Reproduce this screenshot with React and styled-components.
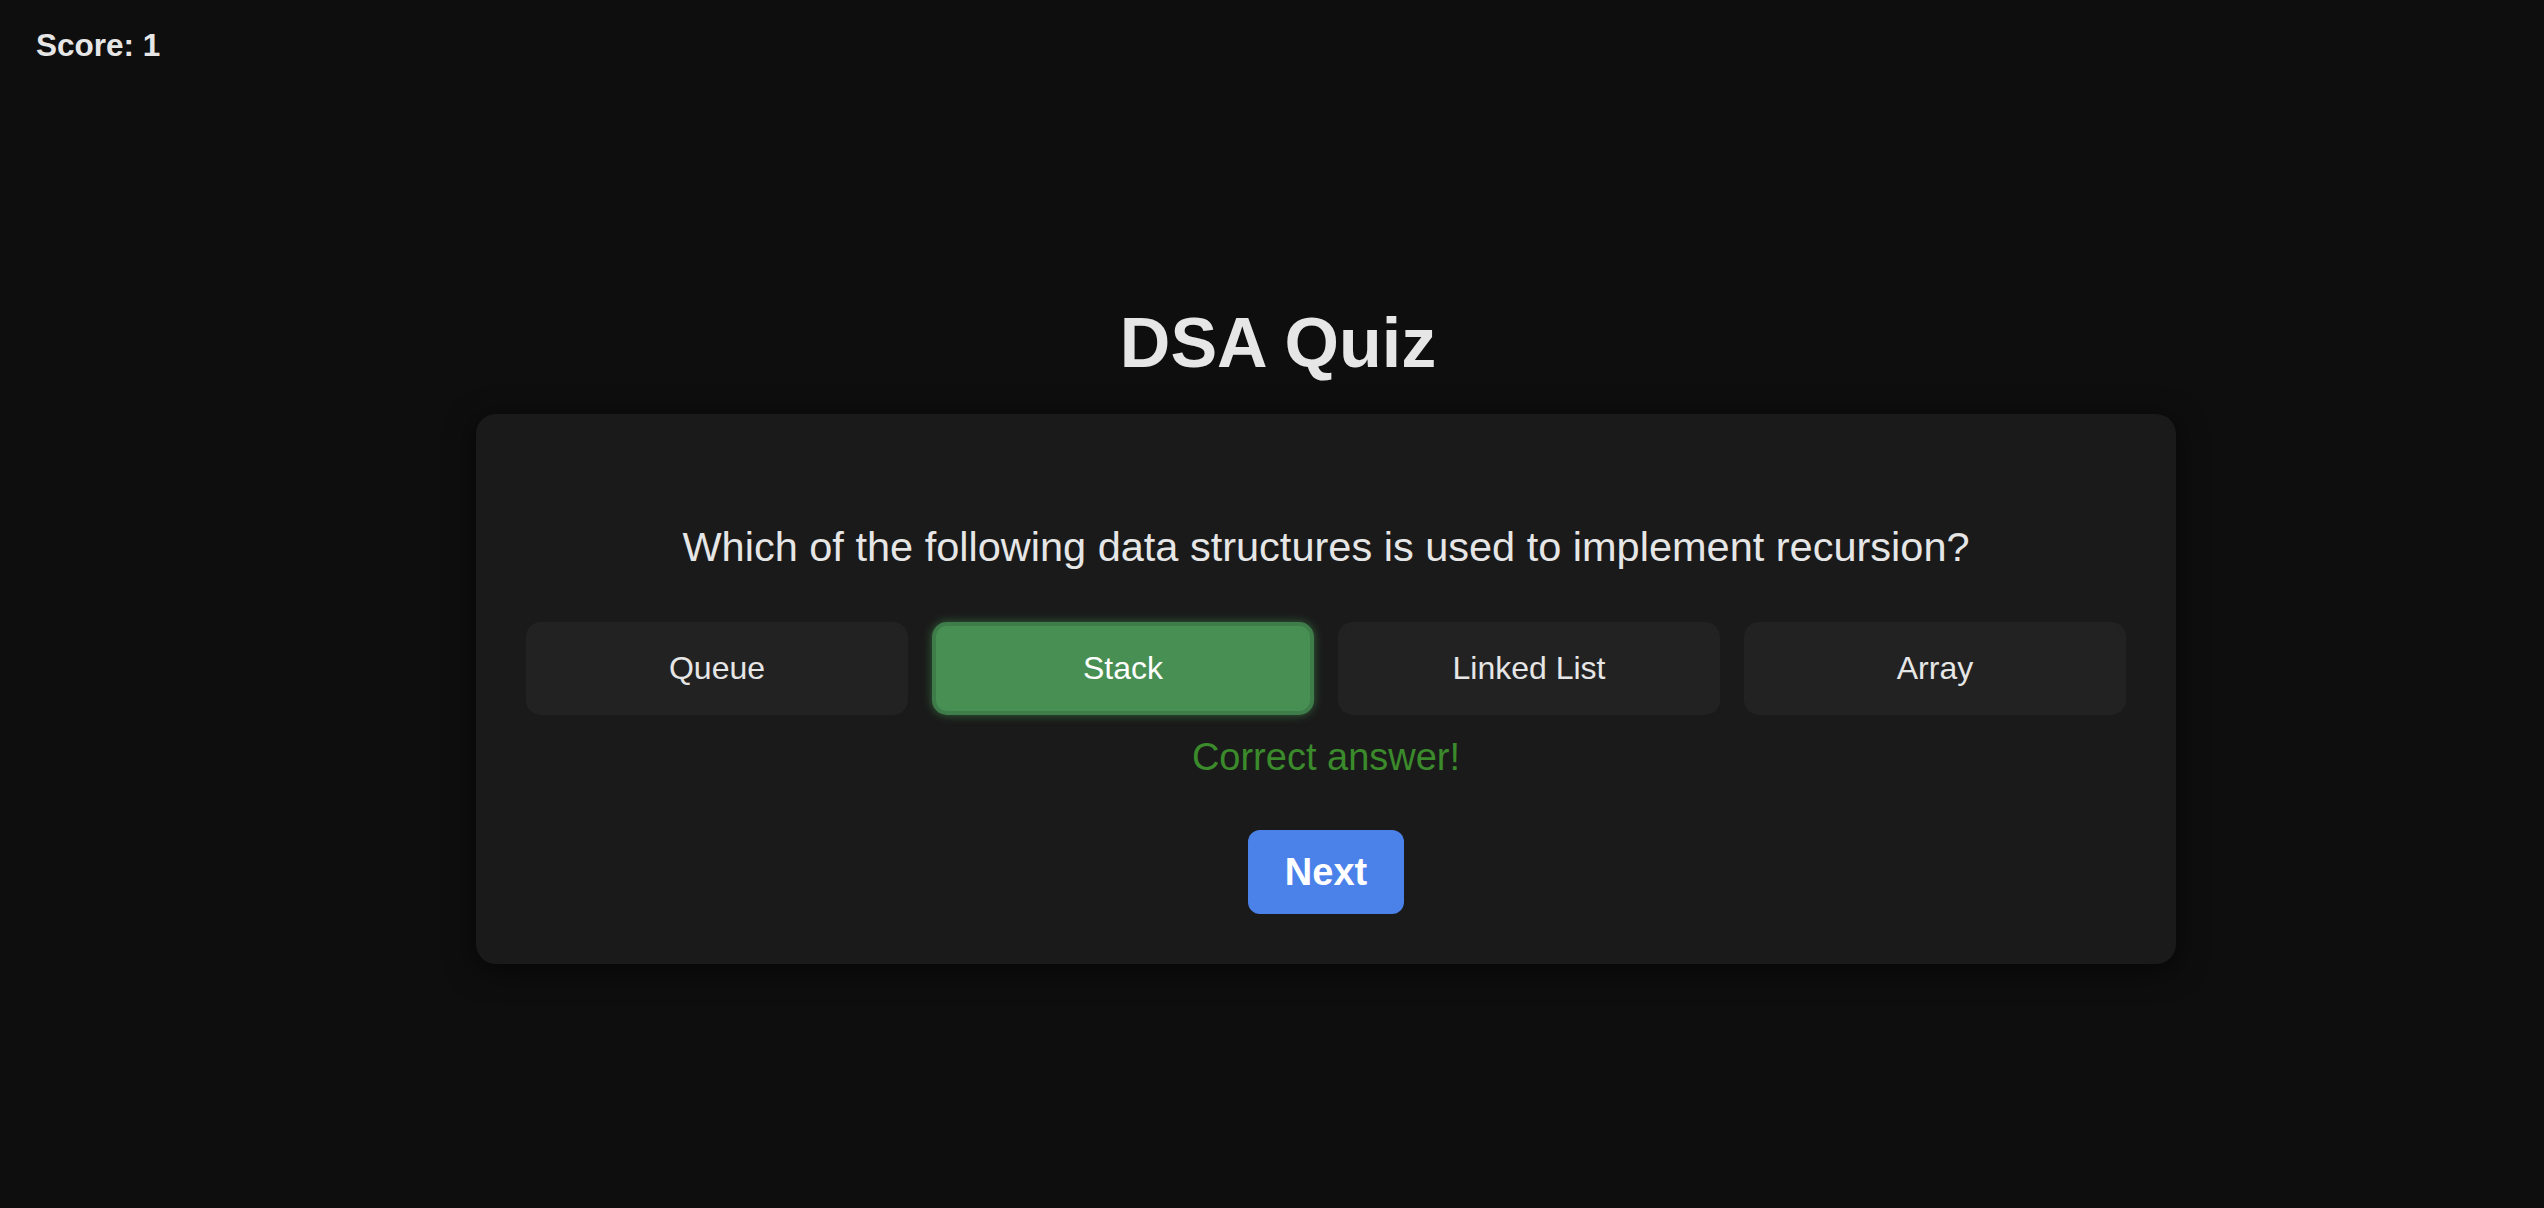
import React from 'react';
import styled, { createGlobalStyle } from 'styled-components';

const GlobalStyle = createGlobalStyle`
  html, body {
    margin: 0;
    padding: 0;
    background: #0e0e0e;
    font-family: "Liberation Sans", Arial, Helvetica, sans-serif;
    color: #e6e6e6;
  }
`;

const Page = styled.div`
  min-height: 1208px;
  display: flex;
  flex-direction: column;
  align-items: center;
`;

const Score = styled.div`
  align-self: flex-start;
  margin: 26px 0 0 36px;
  font-size: 31.5px;
  font-weight: 700;
  line-height: 38px;
`;

const Title = styled.h1`
  margin: 239px 0 31px;
  font-size: 70px;
  font-weight: 700;
  line-height: 80px;
  padding-left: 12px;
`;

const Card = styled.div`
  box-sizing: border-box;
  width: 1700px;
  margin-left: 108px;
  padding: 50px;
  background: #1a1a1a;
  border-radius: 20px;
  box-shadow: 0 6px 30px rgba(0, 0, 0, 0.6), 0 0 40px rgba(255, 255, 255, 0.015);
  display: flex;
  flex-direction: column;
  align-items: center;
`;

const Question = styled.h2`
  margin: 59px 0 51px;
  font-size: 41.5px;
  font-weight: 400;
  line-height: 48px;
  text-align: center;
`;

const Options = styled.div`
  align-self: stretch;
  display: grid;
  grid-template-columns: repeat(4, 1fr);
  gap: 24px;
`;

const Option = styled.button`
  box-sizing: border-box;
  height: 93px;
  border-radius: 15px;
  border: ${p => (p.$correct ? '4px solid #3e7c49' : '4px solid #222222')};
  background: ${p => (p.$correct ? '#488f54' : '#222222')};
  color: ${p => (p.$correct ? '#ffffff' : '#e6e6e6')};
  box-shadow: ${p => (p.$correct ? '0 0 10px rgba(74, 160, 90, 0.55)' : 'none')};
  font-family: inherit;
  font-size: 32px;
  cursor: pointer;
`;

const Feedback = styled.p`
  margin: 20px 0 51px;
  font-size: 38px;
  line-height: 44px;
  color: #3b8a2b;
`;

const NextButton = styled.button`
  width: 156px;
  height: 84px;
  border: none;
  border-radius: 12px;
  background: #4b82ea;
  color: #ffffff;
  font-family: inherit;
  font-size: 38px;
  font-weight: 700;
  cursor: pointer;
`;

const options = ['Queue', 'Stack', 'Linked List', 'Array'];

export default function App() {
  return (
    <>
      <GlobalStyle />
      <Page>
        <Score>Score: 1</Score>
        <Title>DSA Quiz</Title>
        <Card>
          <Question>Which of the following data structures is used to implement recursion?</Question>
          <Options>
            {options.map(o => (
              <Option key={o} $correct={o === 'Stack'}>{o}</Option>
            ))}
          </Options>
          <Feedback>Correct answer!</Feedback>
          <NextButton>Next</NextButton>
        </Card>
      </Page>
    </>
  );
}
